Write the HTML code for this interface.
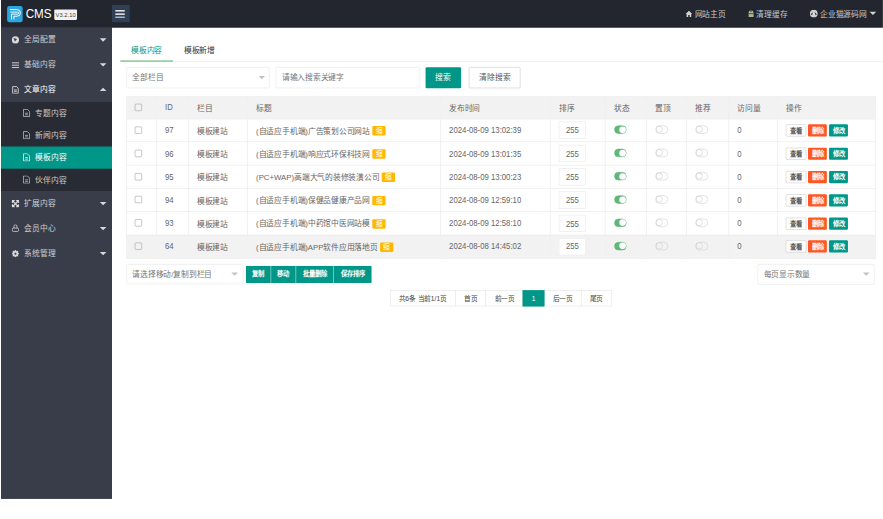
<!DOCTYPE html>
<html lang="zh-CN">
<head>
<meta charset="utf-8">
<style>
html,body{margin:0;padding:0;width:883px;height:519px;overflow:hidden;background:#fff;}
*{box-sizing:border-box;}
#app{position:absolute;left:1px;top:0;width:1589px;height:935px;transform-origin:0 0;transform:scale(0.555);
  font-family:"Liberation Sans",sans-serif;font-size:14px;color:#666;background:#fff;}
.abs{position:absolute;}
/* header */
#hd{position:absolute;left:0;top:0;width:1589px;height:49.6px;z-index:2;background:#23262E;}
#logo{position:absolute;left:10.5px;top:10.8px;width:28.8px;height:28.8px;border-radius:4px;background:#2AA7DF;}
#cms{position:absolute;left:44.5px;top:9px;font-size:21px;line-height:30px;color:#fff;transform:scaleY(1.13);transform-origin:50% 20%;}
#ver{position:absolute;left:96px;top:16.5px;width:41px;height:19px;background:#f2f2f2;border-radius:2px;color:#444;font-size:10.5px;line-height:19px;text-align:center;}
#ham{position:absolute;left:200px;top:8.7px;width:31.5px;height:31.5px;background:#2F4056;}
#ham i{position:absolute;left:5.8px;width:17.6px;height:2.8px;background:#ddd;}
.hnav{position:absolute;top:10px;height:30px;line-height:30px;color:rgba(255,255,255,.75);font-size:14px;white-space:nowrap;}
/* side */
#side{position:absolute;left:0;top:49px;width:200px;height:850px;background:#393D49;}
.ni{position:absolute;left:0;width:200px;height:45px;line-height:45px;color:rgba(255,255,255,.75);font-size:14px;}
.ni .t{position:absolute;left:42px;top:0;}
.ni .ic{position:absolute;left:19px;top:16px;width:14px;height:14px;}
.ni .ar{position:absolute;left:178px;top:20px;width:0;height:0;border-left:6px solid transparent;border-right:6px solid transparent;border-top:6px solid rgba(255,255,255,.8);}
.ni .ar.up{border-top:0;border-bottom:6px solid rgba(255,255,255,.8);top:19px;}
#sub{position:absolute;left:0;top:135px;width:200px;height:160px;background:#282B33;}
.si{position:absolute;left:0;width:200px;height:40px;line-height:40px;color:rgba(255,255,255,.75);font-size:14px;}
.si .t{position:absolute;left:62px;top:0;}
.si .ic{position:absolute;left:39px;top:12px;width:14px;height:15px;}
.si.on{background:#009688;color:#fff;}
/* main */
.tab{position:absolute;top:70px;height:40px;line-height:40px;font-size:14px;color:#333;}
#tabline{position:absolute;left:214px;top:110px;width:1375px;height:1px;background:#e6e6e6;}
.inp{position:absolute;height:38px;border:1px solid #e6e6e6;background:#fff;border-radius:2px;line-height:36px;padding-left:10px;color:#757575;font-size:14px;}
.sel-ar{position:absolute;width:0;height:0;border-left:6px solid transparent;border-right:6px solid transparent;border-top:6px solid #c2c2c2;}
.btn{position:absolute;height:38px;line-height:38px;text-align:center;color:#fff;background:#009688;border-radius:2px;font-size:14px;}
/* table */
#tbl{position:absolute;left:225.7px;top:173px;width:1349.3px;border-collapse:collapse;table-layout:fixed;}
#tbl td,#tbl th{border:1px solid #e6e6e6;padding:0 0 0 15px;text-align:left;font-weight:normal;font-size:14px;color:#666;white-space:nowrap;overflow:hidden;}
#tbl th{background:#f2f2f2;height:40.5px;}
#tbl td{height:41.9px;}
#tbl tr.hv td{background:#f2f2f2;}
.lt{display:inline-block;transform:scaleY(1.17);transform-origin:50% 81%;}
.cb{display:inline-block;width:13px;height:13px;border:1.5px solid #999;border-radius:2px;vertical-align:middle;background:transparent;position:relative;top:-2px;margin-left:-1.2px;}
.num{display:inline-block;width:49px;height:31px;border:1px solid #e6e6e6;background:#fff;text-align:center;line-height:29px;vertical-align:middle;}
.num .lt{position:relative;top:1.5px;}
.sw{display:inline-block;position:relative;width:22px;height:15px;border-radius:8px;vertical-align:middle;top:-2px;}
.sw.on{background:#5FB878;border:1px solid #5FB878;margin-left:1px;}
.sw.on i{position:absolute;right:0.5px;top:0.5px;width:12px;height:12px;border-radius:50%;background:#fff;}
.sw.off{border:1.6px solid #cfcfcf;background:transparent;width:23px;}
.sw.off i{position:absolute;left:0;top:0;width:12px;height:11.8px;border-radius:50%;border:1.6px solid #cfcfcf;background:transparent;}
.bdg{display:inline-block;height:17px;line-height:17px;padding:0 6px;background:#FFB800;color:#fff;font-size:12px;border-radius:2px;vertical-align:middle;position:relative;top:-1px;}
.xs{display:inline-block;height:22px;line-height:22px;padding:0;text-align:center;width:34px;font-size:11.5px;font-weight:bold;color:#fff;border-radius:2px;vertical-align:middle;}
.xs.pr{background:#fff;border:1px solid #c9c9c9;color:#555;line-height:20px;width:36.5px;margin-left:-0.8px;}
.xs.dg{background:#FF5722;}
.xs.gr{background:#009688;}
/* batch */
.grp{position:absolute;left:441.3px;top:479.3px;height:30.4px;display:flex;border-radius:2px;overflow:hidden;}
.grp span{height:30.4px;line-height:30.4px;padding:0;text-align:center;background:#009688;color:#fff;font-size:11.5px;font-weight:bold;border-left:1px solid rgba(255,255,255,.5);}
.grp span:first-child{border-left:0;}
.pg{position:absolute;left:700.5px;top:523px;height:29.4px;display:flex;}
.pg span{height:29.4px;line-height:30px;padding:0 15px;border:1px solid #e2e2e2;margin-right:-1px;font-size:12px;color:#444;background:#fff;}
.pg span.cur{background:#009688;border-color:#009688;color:#fff;position:relative;}
</style>
</head>
<body>
<div id="app">
  <div id="hd">
    <div id="logo"><svg width="29" height="29" viewBox="0 0 29 29"><path d="M4.9 6.3 H18 A5.95 5.95 0 0 1 18 18.2 H12.2 V24" fill="none" stroke="#fff" stroke-width="1.7"/><path d="M6 10.8 H19 A1.8 1.8 0 0 1 19 14.4 H8 V24" fill="none" stroke="#fff" stroke-width="1.7"/></svg></div>
    <div id="cms">CMS</div>
    <div id="ver">V3.2.10</div>
    <div id="ham"><i style="top:9.5px"></i><i style="top:15.2px"></i><i style="top:20.9px"></i></div>
    <div class="hnav" style="left:1233px"><svg width="13" height="12" viewBox="0 0 13 12" style="position:relative;top:1px"><path d="M6.5 0.5 L0.5 6 H2.3 V11.5 H5.2 V8 H7.8 V11.5 H10.7 V6 H12.5 Z" fill="rgba(255,255,255,.8)"/></svg> 网站主页</div>
    <div class="hnav" style="left:1346px"><svg width="11" height="13" viewBox="0 0 11 13" style="position:relative;top:1px"><path d="M1 5.5 A4.5 4.5 0 0 1 10 5.5 V12.5 H1 Z" fill="#aeb394"/><path d="M1 6.5 H10" stroke="#23262E" stroke-width="1.2"/><path d="M4 2.5 H7" stroke="#23262E" stroke-width="1"/></svg> 清理缓存</div>
    <div class="hnav" style="left:1457px"><svg width="15" height="15" viewBox="0 0 15 15" style="position:relative;top:2px"><circle cx="7.5" cy="7.5" r="7" fill="rgba(255,255,255,.78)"/><path d="M3.2 10 A4.4 4.8 0 0 1 11.8 10" stroke="#2a2d36" stroke-width="2.2" fill="none"/><circle cx="7.5" cy="7.2" r="2.1" fill="rgba(255,255,255,.9)"/></svg> 企业猫源码网</div>
    <div class="abs" style="left:1565px;top:21px;width:0;height:0;border-left:6px solid transparent;border-right:6px solid transparent;border-top:6px solid rgba(255,255,255,.8)"></div>
  </div>

  <div id="side">
    <div class="ni" style="top:0"><svg class="ic" viewBox="0 0 14 14"><circle cx="7" cy="7" r="6.5" fill="rgba(255,255,255,.8)"/><path d="M3.6 3.4 L9.8 5.4 Q8 8 6.2 9.8 Z" fill="#393D49"/></svg><span class="t">全局配置</span><i class="ar"></i></div>
    <div class="ni" style="top:45px"><svg class="ic" viewBox="0 0 14 14"><path d="M0.5 3.2 H13.5 M0.5 7.5 H13.5 M0.5 11.7 H13.5" stroke="rgba(255,255,255,.8)" stroke-width="1.7" fill="none"/></svg><span class="t">基础内容</span><i class="ar"></i></div>
    <div class="ni" style="top:90px;color:#fff"><svg class="ic" viewBox="0 0 14 14"><path d="M2 1 H9 L12 4 V13 H2 Z M4.5 7 H9.5 M4.5 9.5 H9.5" stroke="rgba(255,255,255,.85)" stroke-width="1.5" fill="none"/></svg><span class="t">文章内容</span><i class="ar up"></i></div>
    <div id="sub">
      <div class="si" style="top:0"><svg class="ic" viewBox="0 0 14 15"><path d="M1.5 1 H8.5 L12.5 5 V14 H1.5 Z M4.5 8 H9.5 M4.5 10.8 H9.5" stroke="rgba(255,255,255,.75)" stroke-width="1.3" fill="none"/></svg><span class="t">专题内容</span></div>
      <div class="si" style="top:40px"><svg class="ic" viewBox="0 0 14 15"><path d="M1.5 1 H8.5 L12.5 5 V14 H1.5 Z M4.5 8 H9.5 M4.5 10.8 H9.5" stroke="rgba(255,255,255,.75)" stroke-width="1.3" fill="none"/></svg><span class="t">新闻内容</span></div>
      <div class="si on" style="top:80px"><svg class="ic" viewBox="0 0 14 15"><path d="M1.5 1 H8.5 L12.5 5 V14 H1.5 Z M4.5 8 H9.5 M4.5 10.8 H9.5" stroke="#fff" stroke-width="1.3" fill="none"/></svg><span class="t">模板内容</span></div>
      <div class="si" style="top:120px"><svg class="ic" viewBox="0 0 14 15"><path d="M1.5 1 H8.5 L12.5 5 V14 H1.5 Z M4.5 8 H9.5 M4.5 10.8 H9.5" stroke="rgba(255,255,255,.75)" stroke-width="1.3" fill="none"/></svg><span class="t">伙伴内容</span></div>
    </div>
    <div class="ni" style="top:295px"><svg class="ic" viewBox="0 0 14 14"><path d="M1 1 H5.5 L1 5.5 Z M13 1 V5.5 L8.5 1 Z M1 13 V8.5 L5.5 13 Z M13 13 H8.5 L13 8.5 Z" fill="rgba(255,255,255,.75)" stroke="rgba(255,255,255,.75)" stroke-width="1.5" stroke-linejoin="round"/><path d="M3 3 L11 11 M11 3 L3 11" stroke="rgba(255,255,255,.75)" stroke-width="2.6"/></svg><span class="t">扩展内容</span><i class="ar"></i></div>
    <div class="ni" style="top:340px"><svg class="ic" viewBox="0 0 14 14" style="top:15px"><path d="M4.3 7 V3.6 A2.7 2.7 0 0 1 9.7 3.6 V7 M3.2 7 H10.8 Q12.6 7 12.6 9 V11.2 Q12.6 13 10.8 13 H3.2 Q1.4 13 1.4 11.2 V9 Q1.4 7 3.2 7 Z" stroke="rgba(255,255,255,.72)" stroke-width="1.5" fill="none"/></svg><span class="t">会员中心</span><i class="ar"></i></div>
    <div class="ni" style="top:385px"><svg class="ic" viewBox="0 0 14 14"><path d="M7.00 0.50 L5.24 2.75 L2.40 2.40 L2.75 5.24 L0.50 7.00 L2.75 8.76 L2.40 11.60 L5.24 11.25 L7.00 13.50 L8.76 11.25 L11.60 11.60 L11.25 8.76 L13.50 7.00 L11.25 5.24 L11.60 2.40 L8.76 2.75 Z" fill="rgba(255,255,255,.78)" stroke="rgba(255,255,255,.78)" stroke-width="0.8" stroke-linejoin="round"/><circle cx="7" cy="7" r="1.8" fill="#393D49"/></svg><span class="t">系统管理</span><i class="ar"></i></div>
  </div>

  <!-- tabs -->
  <div id="tabline"></div>
  <div class="tab" style="left:214.8px;width:95px;text-align:center;color:#009688;">模板内容</div>
  <div class="abs" style="left:214.8px;top:108.5px;width:95px;height:2.6px;background:#5FB878"></div>
  <div class="tab" style="left:310px;width:95px;text-align:center;">模板新增</div>

  <!-- search -->
  <div class="inp" style="left:225.7px;top:120.5px;width:258.4px;">全部栏目</div>
  <div class="sel-ar" style="left:464px;top:137px"></div>
  <div class="inp" style="left:495px;top:120.5px;width:259.6px;">请输入搜索关键字</div>
  <div class="btn" style="left:764.7px;top:120.5px;width:64px;">搜索</div>
  <div class="btn" style="left:843.2px;top:120.5px;width:93px;background:#fff;border:1px solid #c9c9c9;color:#555;line-height:36px;">清除搜索</div>

  <table id="tbl">
    <colgroup><col style="width:53.9px"><col style="width:57.5px"><col style="width:106.5px"><col style="width:347.8px"><col style="width:197.8px"><col style="width:99.1px"><col style="width:74.8px"><col style="width:72px"><col style="width:75.7px"><col style="width:88.1px"><col style="width:176.1px"></colgroup>
    <tr><th><i class="cb"></i></th><th><span class="lt">ID</span></th><th>栏目</th><th>标题</th><th>发布时间</th><th>排序</th><th>状态</th><th>置顶</th><th>推荐</th><th>访问量</th><th>操作</th></tr>
    <tr><td><i class="cb"></i></td><td><span class="lt">97</span></td><td>模板建站</td><td>(自适应手机端)广告策划公司网站 <span class="bdg">缩</span></td><td><span class="lt">2024-08-09 13:02:39</span></td><td><span class="num"><span class="lt">255</span></span></td><td><span class="sw on"><i></i></span></td><td><span class="sw off"><i></i></span></td><td><span class="sw off"><i></i></span></td><td><span class="lt">0</span></td><td><span class="xs pr">查看</span> <span class="xs dg">删除</span> <span class="xs gr">修改</span></td></tr>
    <tr><td><i class="cb"></i></td><td><span class="lt">96</span></td><td>模板建站</td><td>(自适应手机端)响应式环保科技网 <span class="bdg">缩</span></td><td><span class="lt">2024-08-09 13:01:35</span></td><td><span class="num"><span class="lt">255</span></span></td><td><span class="sw on"><i></i></span></td><td><span class="sw off"><i></i></span></td><td><span class="sw off"><i></i></span></td><td><span class="lt">0</span></td><td><span class="xs pr">查看</span> <span class="xs dg">删除</span> <span class="xs gr">修改</span></td></tr>
    <tr><td><i class="cb"></i></td><td><span class="lt">95</span></td><td>模板建站</td><td>(PC+WAP)高端大气的装修装潢公司 <span class="bdg">缩</span></td><td><span class="lt">2024-08-09 13:00:23</span></td><td><span class="num"><span class="lt">255</span></span></td><td><span class="sw on"><i></i></span></td><td><span class="sw off"><i></i></span></td><td><span class="sw off"><i></i></span></td><td><span class="lt">0</span></td><td><span class="xs pr">查看</span> <span class="xs dg">删除</span> <span class="xs gr">修改</span></td></tr>
    <tr><td><i class="cb"></i></td><td><span class="lt">94</span></td><td>模板建站</td><td>(自适应手机端)保健品健康产品网 <span class="bdg">缩</span></td><td><span class="lt">2024-08-09 12:59:10</span></td><td><span class="num"><span class="lt">255</span></span></td><td><span class="sw on"><i></i></span></td><td><span class="sw off"><i></i></span></td><td><span class="sw off"><i></i></span></td><td><span class="lt">0</span></td><td><span class="xs pr">查看</span> <span class="xs dg">删除</span> <span class="xs gr">修改</span></td></tr>
    <tr><td><i class="cb"></i></td><td><span class="lt">93</span></td><td>模板建站</td><td>(自适应手机端)中药馆中医网站模 <span class="bdg">缩</span></td><td><span class="lt">2024-08-09 12:58:10</span></td><td><span class="num"><span class="lt">255</span></span></td><td><span class="sw on"><i></i></span></td><td><span class="sw off"><i></i></span></td><td><span class="sw off"><i></i></span></td><td><span class="lt">0</span></td><td><span class="xs pr">查看</span> <span class="xs dg">删除</span> <span class="xs gr">修改</span></td></tr>
    <tr class="hv"><td><i class="cb"></i></td><td><span class="lt">64</span></td><td>模板建站</td><td>(自适应手机端)APP软件应用落地页 <span class="bdg">缩</span></td><td><span class="lt">2024-08-08 14:45:02</span></td><td><span class="num"><span class="lt">255</span></span></td><td><span class="sw on"><i></i></span></td><td><span class="sw off"><i></i></span></td><td><span class="sw off"><i></i></span></td><td><span class="lt">0</span></td><td><span class="xs pr">查看</span> <span class="xs dg">删除</span> <span class="xs gr">修改</span></td></tr>
  </table>

  <!-- batch -->
  <div class="inp" style="left:225.7px;top:476px;width:211.2px;height:36px;line-height:34px;">请选择移动/复制到栏目</div>
  <div class="sel-ar" style="left:415px;top:491px"></div>
  <div class="grp"><span style="width:44.3px">复制</span><span style="width:45.6px">移动</span><span style="width:67.8px">批量删除</span><span style="width:68.6px">保存排序</span></div>

  <div class="inp" style="left:1363px;top:476px;width:210.7px;height:36.5px;line-height:34.5px;">每页显示数量</div>
  <div class="sel-ar" style="left:1553px;top:491px"></div>

  <div class="pg"><span>共6条 当前1/1页</span><span>首页</span><span>前一页</span><span class="cur">1</span><span>后一页</span><span>尾页</span></div>
</div>
</body>
</html>
